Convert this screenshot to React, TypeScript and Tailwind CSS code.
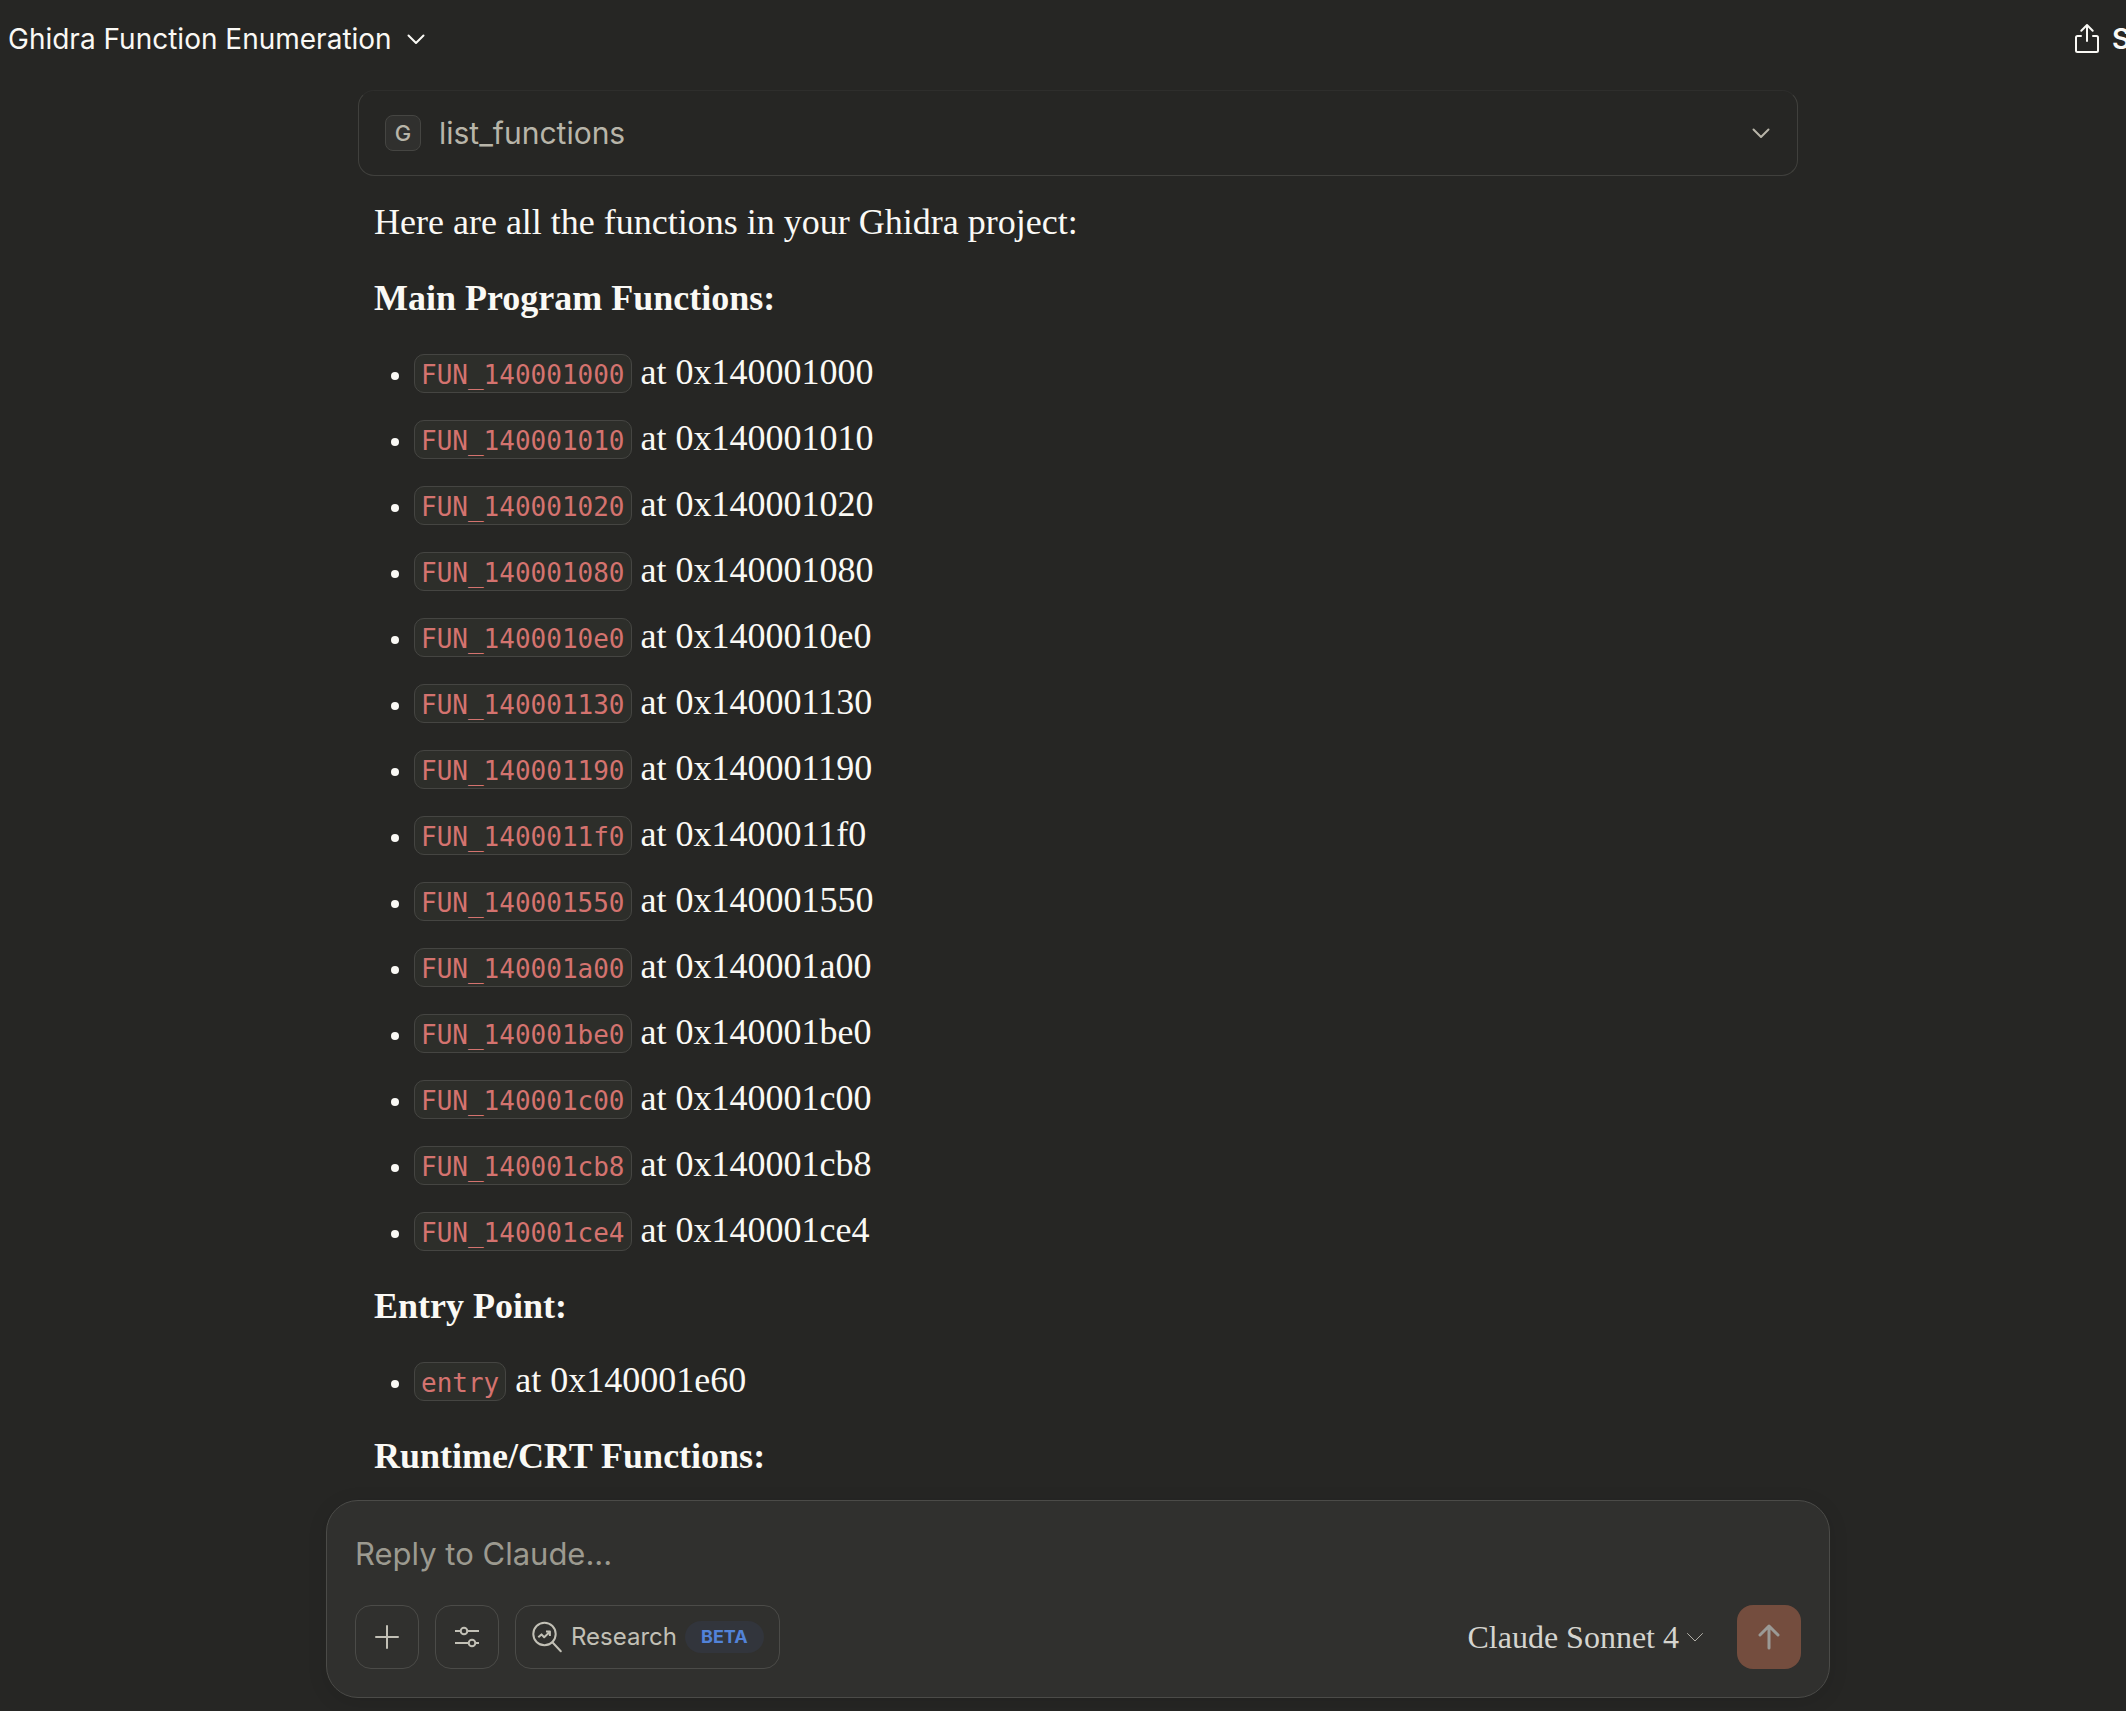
const MAIN_FUNCTIONS = [
  "140001000",
  "140001010",
  "140001020",
  "140001080",
  "1400010e0",
  "140001130",
  "140001190",
  "1400011f0",
  "140001550",
  "140001a00",
  "140001be0",
  "140001c00",
  "140001cb8",
  "140001ce4",
];

function Chevron({ className, stroke = 2 }: { className?: string; stroke?: number }) {
  return (
    <svg
      aria-hidden="true"
      viewBox="0 0 20 20"
      className={className}
      fill="none"
      stroke="currentColor"
      strokeWidth={stroke}
      strokeLinecap="round"
      strokeLinejoin="round"
    >
      <path d="M2.5 6.5 10 14l7.5-7.5" />
    </svg>
  );
}

function ShareIcon() {
  return (
    <svg
      aria-hidden="true"
      viewBox="0 0 28 34"
      className="h-[34px] w-7 shrink-0"
      fill="none"
      stroke="currentColor"
      strokeWidth="2"
      strokeLinecap="round"
      strokeLinejoin="round"
    >
      <path d="M9 14H5.5A1.5 1.5 0 0 0 4 15.500V28.500A1.500 1.500 0 0 0 5.500 30h19a1.500 1.500 0 0 0 1.500-1.500V15.500A1.500 1.500 0 0 0 24.500 14H21" />
      <path d="M15 19V3M9.300 8.700 15 3l5.700 5.700" />
    </svg>
  );
}

function SlidersIcon() {
  return (
    <svg aria-hidden="true" viewBox="0 0 32 32" className="size-8" fill="none" stroke="currentColor" strokeWidth="2">
      <path d="M4 10h5.700M16.300 10H28M4 22h13.700M24.300 22H28" />
      <circle cx="13" cy="10" r="3.300" />
      <circle cx="21" cy="22" r="3.300" />
    </svg>
  );
}

function ResearchIcon() {
  return (
    <svg
      aria-hidden="true"
      viewBox="0 0 32 32"
      className="size-8 shrink-0"
      fill="none"
      stroke="currentColor"
      strokeWidth="2"
      strokeLinejoin="round"
    >
      <circle cx="13.500" cy="13" r="11.200" />
      <path d="m21.400 21.200 8.400 9" strokeLinecap="round" />
      <path d="m7.300 16.300 3.200-2.900 2.700 2.900 5.500-5.400M15 10.600h3.900v4.300" />
    </svg>
  );
}

function FunctionList({ items }: { items: { name: string; address: string }[] }) {
  return (
    <ul className="mt-[26px] mb-7 flex list-disc flex-col gap-[18px] pl-10 marker:text-[28px]">
      {items.map(({ name, address }) => (
        <li key={name}>
          <code className="rounded-[10px] border border-[#454542] bg-[#2d2e2a] px-[6px] pt-[5px] pb-[2px] font-['DejaVu_Sans_Mono',monospace] text-[26px] leading-none text-[#d4736f]">
            {name}
          </code>{" "}
          at 0x{address}
        </li>
      ))}
    </ul>
  );
}

export default function App() {
  return (
    <div className="flex min-h-screen flex-col overflow-hidden bg-[#262624] font-['Inter',sans-serif] text-[#faf9f5]">
      <header className="flex h-[78px] items-center justify-between pl-2">
        <button type="button" className="flex items-center gap-[14px] text-[28px] leading-9">
          Ghidra Function Enumeration
          <Chevron className="size-5" />
        </button>
        <button
          type="button"
          className="flex w-[54px] items-center gap-3 overflow-hidden text-[28px] leading-9 font-semibold whitespace-nowrap"
        >
          <ShareIcon />
          Share
        </button>
      </header>

      <main className="flex flex-1 flex-col items-center pt-3 pl-[30px]">
        <div className="w-full max-w-[1440px]">
          <button
            type="button"
            className="flex h-[86px] w-full items-center rounded-2xl border border-[#40403d] border-t-[#2e2e2c] px-[26px] text-[#b8b5a9]"
          >
            <span className="flex size-9 items-center justify-center rounded-lg border border-[#454542] bg-[#30302e] text-[22px] leading-none font-medium">
              G
            </span>
            <span className="ml-[18px] text-[30px] leading-9">list_functions</span>
            <Chevron className="ml-auto size-5" />
          </button>

          <article className="mt-[22px] px-4 font-['Liberation_Serif',serif] text-[36px] leading-[48px]">
            <p className="mb-7">Here are all the functions in your Ghidra project:</p>
            <p>
              <strong>Main Program Functions:</strong>
            </p>
            <FunctionList items={MAIN_FUNCTIONS.map((address) => ({ name: `FUN_${address}`, address }))} />
            <p>
              <strong>Entry Point:</strong>
            </p>
            <FunctionList items={[{ name: "entry", address: "140001e60" }]} />
            <p>
              <strong>Runtime/CRT Functions:</strong>
            </p>
          </article>
        </div>
      </main>

      <footer className="flex justify-center pb-[13px] pl-[30px]">
        <form
          className="w-full max-w-[1504px] rounded-[32px] border border-[#4b4b48] bg-[#30302e] px-7 pt-[33px] pb-7 shadow-[0_4px_20px_rgba(0,0,0,0.1)]"
          onSubmit={(event) => event.preventDefault()}
        >
          <input
            type="text"
            aria-label="Message"
            placeholder="Reply to Claude..."
            className="block h-10 w-full bg-transparent text-[31px] leading-10 outline-none placeholder:text-[#9c9a90]"
          />
          <div className="mt-[31px] flex items-center gap-4 text-[#c2c0b6]">
            <button
              type="button"
              aria-label="Add"
              className="flex size-16 items-center justify-center rounded-2xl border border-[#4b4b48]"
            >
              <svg aria-hidden="true" viewBox="0 0 32 32" className="size-8" stroke="currentColor" strokeWidth="2" strokeLinecap="round">
                <path d="M16 5v22M5 16h22" />
              </svg>
            </button>
            <button
              type="button"
              aria-label="Tools"
              className="flex size-16 items-center justify-center rounded-2xl border border-[#4b4b48]"
            >
              <SlidersIcon />
            </button>
            <button
              type="button"
              className="flex h-16 items-center rounded-2xl border border-[#4b4b48] px-[15px] text-2xl leading-8"
            >
              <ResearchIcon />
              <span className="ml-2">Research</span>
              <span className="ml-2 flex h-8 items-center rounded-full bg-[#32353c] px-4 text-lg leading-none font-bold text-[#5283d8]">
                BETA
              </span>
            </button>
            <button
              type="button"
              className="mr-4 ml-auto flex items-center gap-1.5 font-['Liberation_Serif',serif] text-[32px] leading-10 text-[#d5d4cf]"
            >
              Claude Sonnet 4
              <Chevron className="size-5 text-[#b0aea6]" stroke={1} />
            </button>
            <button
              type="submit"
              aria-label="Send message"
              className="flex size-16 items-center justify-center rounded-2xl bg-[#744d3e] text-[#9b9a96]"
            >
              <svg
                aria-hidden="true"
                viewBox="0 0 32 32"
                className="size-8"
                fill="none"
                stroke="currentColor"
                strokeWidth="3"
                strokeLinecap="round"
                strokeLinejoin="round"
              >
                <path d="M16 27V5M7 14l9-9 9 9" />
              </svg>
            </button>
          </div>
        </form>
      </footer>
    </div>
  );
}
